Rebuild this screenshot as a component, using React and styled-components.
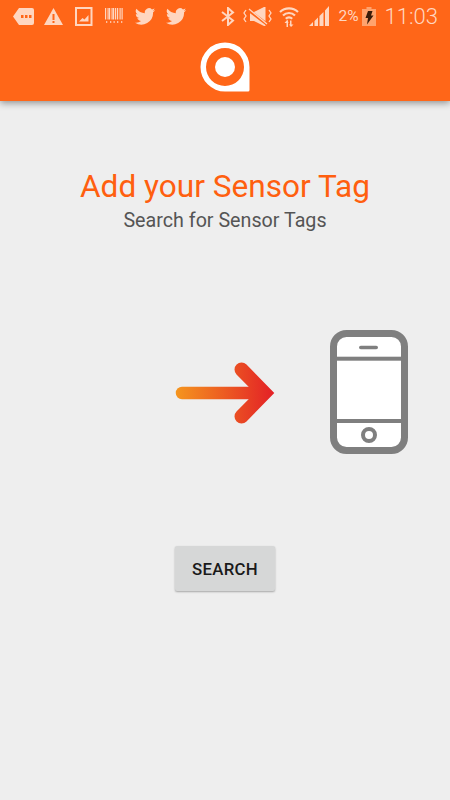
import React from "react";
import styled, { createGlobalStyle } from "styled-components";

const Global = createGlobalStyle`
    html, body {
        margin: 0;
        height: 100%;
        background: #eeeeee;
    }
    #root {
        height: 100%;
    }
`;

const Page = styled.div`
    display: flex;
    flex-direction: column;
    align-items: center;
    width: 450px;
    height: 800px;
    overflow: hidden;
    background: #eeeeee;
    font-family: Roboto, "Liberation Sans", sans-serif;
`;

const Header = styled.header`
    display: flex;
    flex-direction: column;
    align-self: stretch;
    height: 101px;
    background: #ff6618;
    box-shadow: 0 2px 7px rgba(0, 0, 0, 0.4);
`;

const StatusBar = styled.div`
    display: flex;
    align-items: center;
    justify-content: space-between;
    height: 32px;
    padding: 0 12px 0 13px;
    color: #ffd6c0;
`;

const StatusGroup = styled.div`
    display: flex;
    align-items: center;
    gap: ${props => props.$gap}px;
`;

const StatusIcon = styled.svg`
    display: block;
    fill: currentColor;
`;

const Percent = styled.span`
    width: 19px;
    font-size: 15.5px;
    white-space: nowrap;
`;

const Time = styled.span`
    margin-left: -1px;
    font-size: 22px;
    font-weight: 300;
`;

const LogoRow = styled.div`
    display: flex;
    justify-content: center;
    padding-top: 10px;
`;

const Title = styled.h1`
    margin: 68px 0 0;
    font-size: 31.6px;
    line-height: 36px;
    font-weight: 400;
    color: #ff5f0f;
`;

const Subtitle = styled.p`
    margin: 4px 0 0;
    font-size: 19.7px;
    line-height: 24px;
    color: #555555;
`;

const Illustration = styled.div`
    display: flex;
    align-items: center;
    align-self: stretch;
    gap: 55px;
    margin-top: 97px;
    padding-left: 175px;
`;

const SearchButton = styled.button`
    margin-top: 92px;
    width: 100px;
    height: 45px;
    padding: 1px 0 0;
    border: none;
    border-radius: 2px;
    background: #d6d7d7;
    box-shadow: 0 1px 2px rgba(0, 0, 0, 0.3);
    color: #1a1a1a;
    font-family: inherit;
    font-size: 16.8px;
    font-weight: 500;
    letter-spacing: 0.3px;
`;

const Twitter = () => (
    <StatusIcon width="21" height="17" viewBox="0 0 25 20">
        <path d="M24 2.4a9.8 9.8 0 0 1-2.8.8A5 5 0 0 0 23.3.5a9.800 9.800 0 0 1-3.100 1.200A4.900 4.900 0 0 0 11.800 6.200 13.900 13.900 0 0 1 1.700.900a4.900 4.900 0 0 0 1.500 6.600 4.900 4.900 0 0 1-2.200-.6 4.900 4.900 0 0 0 3.900 4.900 4.900 4.900 0 0 1-2.200.1 4.900 4.900 0 0 0 4.600 3.400A9.900 9.900 0 0 1 0 17.300 13.900 13.900 0 0 0 21.500 5q1.500-1.100 2.500-2.600z" />
    </StatusIcon>
);

const Barcode = () => (
    <StatusIcon width="20" height="16" viewBox="0 0 20 16">
        {[0, 2.500, 4, 6.500, 8, 10, 12, 14.500, 16.500].map(x => (
            <rect key={x} x={x} y="0" width="1.200" height="11.500" />
        ))}
        {[1, 5, 8.500, 12, 16].map(x => (
            <rect key={x} x={x} y="13" width="1.300" height="2" opacity="0.8" />
        ))}
    </StatusIcon>
);

const Logo = () => (
    <svg width="50" height="50" viewBox="0 0 50 50">
        <path
            fill="#fff"
            fillRule="evenodd"
            d="M25 .5A24.500 24.500 0 0 1 49.500 25V48a1.500 1.500 0 0 1-1.500 1.500H25A24.500 24.500 0 0 1 25 .5zM25 6a19 19 0 1 0 0 38 19 19 0 0 0 0-38z"
        />
        <circle cx="25" cy="25" r="10" fill="#fff" />
    </svg>
);

const Arrow = () => (
    <svg width="100" height="64" viewBox="0 0 100 64">
        <defs>
            <linearGradient id="arrowFill" gradientUnits="userSpaceOnUse" x1="0" y1="0" x2="100" y2="0">
                <stop offset="0" stopColor="#f5961e" />
                <stop offset="1" stopColor="#e31f26" />
            </linearGradient>
        </defs>
        <path
            fill="none"
            stroke="url(#arrowFill)"
            strokeWidth="12.500"
            strokeLinecap="round"
            d="M7 33H88"
        />
        <path
            fill="none"
            stroke="url(#arrowFill)"
            strokeWidth="14"
            strokeLinecap="round"
            strokeLinejoin="miter"
            d="M66.500 9.500L89.500 33L66.500 56.500"
        />
    </svg>
);

const Phone = () => (
    <svg width="78" height="124" viewBox="0 0 78 124">
        <rect x="3.500" y="3.500" width="71" height="117" rx="13" fill="#fff" stroke="#7f7f7f" strokeWidth="7" />
        <rect x="6" y="26.700" width="66" height="4" fill="#7f7f7f" />
        <rect x="6" y="89" width="66" height="4" fill="#7f7f7f" />
        <rect x="29" y="15.700" width="19" height="3.600" rx="1.800" fill="#7f7f7f" />
        <circle cx="39" cy="105" r="6" fill="#fff" stroke="#7f7f7f" strokeWidth="4" />
    </svg>
);

export default function App() {
    return (
        <Page>
            <Global />
            <Header>
                <StatusBar>
                    <StatusGroup $gap={10}>
                        <StatusIcon width="21" height="17" viewBox="0 0 21 17">
                            <path
                                fillRule="evenodd"
                                d="M6 0H19a2 2 0 0 1 2 2V15a2 2 0 0 1-2 2H6L0 8.500zM8 7v3h2.500V7zM12 7v3h2.500V7zM16 7v3h2.500V7z"
                            />
                        </StatusIcon>
                        <StatusIcon width="21" height="17" viewBox="0 0 21 17">
                            <path fillRule="evenodd" d="M9.500 0L19 17H0zM8.500 6v6h2V6zM8.500 13v2h2v-2z" />
                        </StatusIcon>
                        <StatusIcon width="20" height="19" viewBox="0 0 20 19">
                            <path
                                fillRule="evenodd"
                                d="M0 0H17.500V19H0zM2 2V17H15.500V2zM4 14.500l3.500-3.500 2 1.500 4-4.500v6.500z"
                            />
                        </StatusIcon>
                        <Barcode />
                        <Twitter />
                        <Twitter />
                    </StatusGroup>
                    <StatusGroup $gap={10}>
                        <StatusGroup $gap={7}>
                            <StatusIcon width="15" height="19" viewBox="0 0 15 19">
                                <path
                                    fill="none"
                                    stroke="currentColor"
                                    strokeWidth="2"
                                    d="M1 5L12 13.500L7 18V1L12 5.500L1 14"
                                />
                            </StatusIcon>
                            <StatusIcon width="29" height="19" viewBox="0 0 29 19">
                                <path d="M7 5h4L21 0h1.500V19H21L11 14H7z" />
                                <path fill="none" stroke="#ff6618" strokeWidth="3" d="M4 2L25 18" />
                                <path
                                    fill="none"
                                    stroke="currentColor"
                                    strokeWidth="1.300"
                                    d="M6 2L24 17M3 3L1 6l2 3-2 3 2 3M26 3l2 3-2 3 2 3-2 3"
                                />
                            </StatusIcon>
                            <StatusIcon width="20" height="21" viewBox="0 0 20 21">
                                <path
                                    fill="none"
                                    stroke="currentColor"
                                    strokeWidth="2.200"
                                    d="M1 6a13 13 0 0 1 18 0M4 9.500a8.500 8.500 0 0 1 12 0M6.800 12.800a4.500 4.500 0 0 1 6.400 0"
                                />
                                <path d="M7.500 21v-4H5.500l3-3.500 1 3.500H9v4zM11 14.500h1.500v4H14.500l-2.500 2.500-2-2.500h1z" />
                            </StatusIcon>
                        </StatusGroup>
                        <StatusIcon width="20" height="20" viewBox="0 0 20 20">
                            <path
                                d="M0 20L4 16V20zM5.500 20V15L9 11.500V20zM10.500 20V10L14.500 6V20zM16 20V4.500L20 0V20z"
                            />
                        </StatusIcon>
                        <StatusGroup $gap={4}>
                            <Percent>2%</Percent>
                            <StatusIcon width="14" height="19" viewBox="0 0 14 19">
                                <path fill="#ffa36e" d="M4.500 0h5v2H14v17H0V2h4.500z" />
                                <path fill="#3a1c0a" d="M6 4H10.500L9 8.500H11.500L5 17.500 6 11H3.500z" />
                            </StatusIcon>
                        </StatusGroup>
                        <Time>11:03</Time>
                    </StatusGroup>
                </StatusBar>
                <LogoRow>
                    <Logo />
                </LogoRow>
            </Header>
            <Title>Add your Sensor Tag</Title>
            <Subtitle>Search for Sensor Tags</Subtitle>
            <Illustration>
                <Arrow />
                <Phone />
            </Illustration>
            <SearchButton>SEARCH</SearchButton>
        </Page>
    );
}
